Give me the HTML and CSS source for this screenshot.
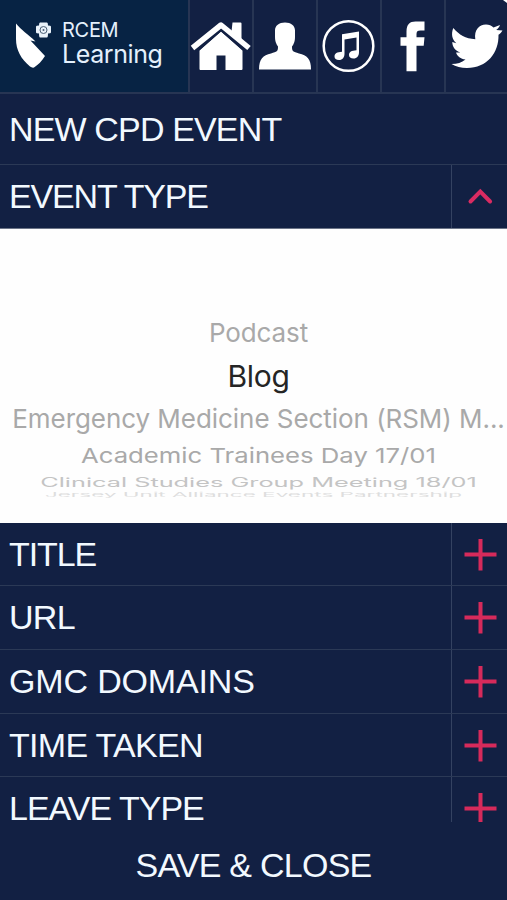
FILE: index.html
```html
<!DOCTYPE html>
<html lang="en">
<head>
<meta charset="utf-8">
<title>RCEM Learning</title>
<link rel="stylesheet" href="styles.css">
</head>
<body>
<div class="app">
  <header class="topbar">
    <a class="brand">
      <svg class="brand-mark" viewBox="0 0 38 50"><path fill="#fff" d="M1 3.500C6 10 13 14 20.500 21.500L15.500 20.500 30 36C27 41 23 45 19 47.500Q17 48 15 46.500C6 39 1 30 1 19Z"/><path fill="#e9f2fa" d="M25 2.500h7q1 0 1 3q3 0 3 1v6q0 1-3 1q0 4-1 4h-7q-1 0-1-4q-3 0-3-1V6.500q0-1 3-1q0-3 1-3Z"/><circle cx="28.500" cy="10" r="3.500" fill="none" stroke="#4c6076"/><circle cx="28.500" cy="10" r="1" fill="#4c6076"/></svg>
      <span class="brand-name"><span class="brand-top">RCEM</span><span class="brand-bottom">Learning</span></span>
    </a>
    <a class="tab"><svg viewBox="0 0 64 93"><path fill="#fff" d="M43.500 22.500h8q1 0 1 1v17l-10-9ZM10.500 50.500l21.500-19 21.500 19v18.500q0 1-1 1H36.500V55.500h-9v14.500H11.500q-1 0-1-1Z"/><path fill="none" stroke="#122043" stroke-width="1.500" d="M9 50.500 32 30.500 55 50.500"/><path fill="none" stroke="#fff" stroke-width="5.500" stroke-linejoin="round" d="M3.500 48 32 25 60 48"/></svg></a>
    <a class="tab"><svg viewBox="-1 0 64 93"><path fill="#fff" d="M31 22.500c6 0 10 3 10 8v6c0 5-1 7-3 10 0 5 1 5 7 7 8 2 12 5 12 16H5c0-11 4-14 12-16 6-2 7-2 7-7-2-3-3-5-3-10v-6c0-5 4-8 10-8Z"/></svg></a>
    <a class="tab"><svg viewBox="0 0 64 93"><circle cx="31.500" cy="46" r="24.800" fill="none" stroke="#fff" stroke-width="2.500"/><path fill="#fff" d="M25 34.300 42 31.500v20.500c0 4-2 6.500-5.500 6.500-3 0-4.500-1.500-4.500-3.500 0-3 2.500-4.500 7.500-4.700V37.500l-12 2V53.500c0 4-2 6.500-5.500 6.500-3 0-4.500-1.500-4.500-3.500 0-3 2.500-4.500 7.500-4.700Z"/></svg></a>
    <a class="tab"><svg viewBox="0 0 64 93"><path fill="#fff" d="M43.500 21.500v9h-4c-3 0-4 1-4 3.500v3.200h8l-.8 8.500h-7.200v25.500h-10V45.700h-6v-8.500h6v-6c0-6.500 3-9.700 9-9.700Z"/></svg></a>
    <a class="tab"><svg viewBox="0 0 64 93"><path fill="#fff" d="M57.500 30.500c-1 2-2.500 3.200-4 4.300C54 53 42 68 22 68c-6 0-11-1.500-15.500-4 6 0 10-1.500 14-4.500-5-.5-8-3-9.500-7h4.300c-5-1.700-8-5.500-8-10.500l4 1.200c-4-3.700-5.500-8.700-3-15.200 6 7 12 10.500 22 11.200C29 30 34 24.500 41 24.500c3 0 5.500 1 7.500 3l6.500-2.500c-.7 2.200-2 3.700-3.800 5Z"/></svg></a>
    <span class="corner"></span>
  </header>

  <main class="form">
    <h1 class="row heading"><span class="label heading-label">NEW CPD EVENT</span></h1>
    <div class="row open"><span class="label event-type">EVENT TYPE</span><button class="toggle"><svg viewBox="0 0 55 63"><path d="m18.500 36.500 9.800-9.800 9.800 9.800" fill="none" stroke="#d92b62" stroke-width="4" stroke-linecap="round"/></svg></button></div>
    <div class="picker">
      <div class="option near-top"><span>Podcast</span></div>
      <div class="option selected"><span>Blog</span></div>
      <div class="option near"><span>Emergency Medicine Section (RSM) M...</span></div>
      <div class="option far"><span>Academic Trainees Day 17/01</span></div>
      <div class="option farther"><span>Clinical Studies Group Meeting 18/01</span></div>
      <div class="option edge"><span>Jersey Unit Alliance Events Partnership</span></div>
    </div>
    <div class="row"><span class="label title">TITLE</span><button class="toggle"><svg viewBox="0 0 55 63"><path class="plus" d="M12.500 31.500h32M28.500 16v31.500"/></svg></button></div>
    <div class="row"><span class="label url">URL</span><button class="toggle"><svg viewBox="0 0 55 63"><path class="plus" d="M12.500 31.500h32M28.500 16v31.500"/></svg></button></div>
    <div class="row"><span class="label domains">GMC DOMAINS</span><button class="toggle"><svg viewBox="0 0 55 63"><path class="plus" d="M12.500 31.500h32M28.500 16v31.500"/></svg></button></div>
    <div class="row"><span class="label time">TIME TAKEN</span><button class="toggle"><svg viewBox="0 0 55 63"><path class="plus" d="M12.500 31.500h32M28.500 16v31.500"/></svg></button></div>
    <div class="row last"><span class="label leave">LEAVE TYPE</span><button class="toggle"><svg viewBox="0 0 55 63"><path class="plus" d="M12.500 31.500h32M28.500 16v31.500"/></svg></button></div>
  </main>
  <footer class="save"><span>SAVE &amp; CLOSE</span></footer>
</div>
</body>
</html>
```
FILE: styles.css
```css
* { box-sizing: border-box; }
body { margin: 0; background: #122043; }
.app {
  width: 507px;
  height: 900px;
  display: flex;
  flex-direction: column;
  overflow: hidden;
  background: #122043;
  color: #f2f9ff;
  font-family: "Liberation Sans", Arial, sans-serif;
}
.topbar {
  position: relative;
  flex: none;
  height: 94px;
  display: grid;
  grid-template-columns: 188px repeat(4, 64px) 63px;
  border-bottom: 2px solid #273553;
}
.brand {
  display: flex;
  padding: 20px 0 0 15px;
  background: #072344;
}
.brand-mark { width: 38px; height: 50px; flex: none; }
.brand-name {
  display: flex;
  flex-direction: column;
  padding-left: 9px;
  font-family: Inter, "Liberation Sans", sans-serif;
  color: #e4f0fc;
}
.brand-top { font-size: 20px; line-height: 21px; letter-spacing: -0.3px; }
.brand-bottom { font-size: 25px; line-height: 26px; letter-spacing: -0.4px; }
.tab { border-left: 2px solid #273553; height: 92px; overflow: hidden; }
.tab svg { display: block; width: 64px; height: 93px; margin-left: -1px; }
.corner {
  position: absolute;
  top: 0;
  right: 0;
  width: 4px;
  height: 3px;
  background: #fff;
  clip-path: polygon(0 0, 100% 0, 100% 100%);
}
.form { flex: none; height: 728px; }
.row {
  height: 63.7px;
  display: flex;
  margin: 0;
  border-bottom: 1.500px solid #2b3956;
}
.row.heading { height: 71px; }
.row.open { height: 64px; border-bottom-color: #6b7487; }
.row.last { height: 45px; border-bottom: 0; }
.label {
  flex: 1;
  padding-left: 9px;
  font-size: 34px;
  font-weight: 400;
  line-height: 62px;
  letter-spacing: -0.7px;
  white-space: nowrap;
}
.heading-label { line-height: 70px; letter-spacing: -0.85px; }
.event-type { letter-spacing: -1.15px; }
.title { letter-spacing: -1.1px; }
.domains { letter-spacing: -0.15px; }
.leave { letter-spacing: -1px; }
.toggle {
  width: 56px;
  padding: 0;
  border: 0;
  border-left: 1px solid #344261;
  background: none;
  overflow: hidden;
  display: flex;
}
.toggle svg { display: block; flex: none; width: 55px; height: 63px; }
.plus { fill: none; stroke: #d62a5b; stroke-width: 4; }
.picker {
  height: 293.500px;
  padding-top: 83px;
  overflow: hidden;
  background: #fefefe;
  font-family: Inter, "Liberation Sans", sans-serif;
  color: #a9a9a9;
}
.option {
  display: flex;
  align-items: center;
  justify-content: center;
  padding-left: 10px;
  white-space: nowrap;
}
.option span { flex: none; line-height: 34px; }
.near-top { height: 42px; }
.near-top span { font-size: 26px; letter-spacing: -0.1px; }
.selected { height: 44px; color: #252525; }
.selected span { font-size: 30px; letter-spacing: -0.3px; }
.near { height: 41px; }
.near span { font-size: 26px; letter-spacing: -0.05px; }
.far { height: 33px; }
.far span { font-size: 25.700px; transform: scaleY(0.8); }
.farther { height: 19px; color: #c4c4c4; }
.farther span { font-size: 25.300px; transform: scaleY(0.5); }
.edge { height: 7px; color: #dedede; padding-left: 0; }
.edge span { font-size: 22.500px; line-height: 28px; transform: scaleY(0.25); }
.save {
  flex: 1;
  text-align: center;
  font-size: 34px;
  line-height: 86px;
  letter-spacing: -0.75px;
}
```
